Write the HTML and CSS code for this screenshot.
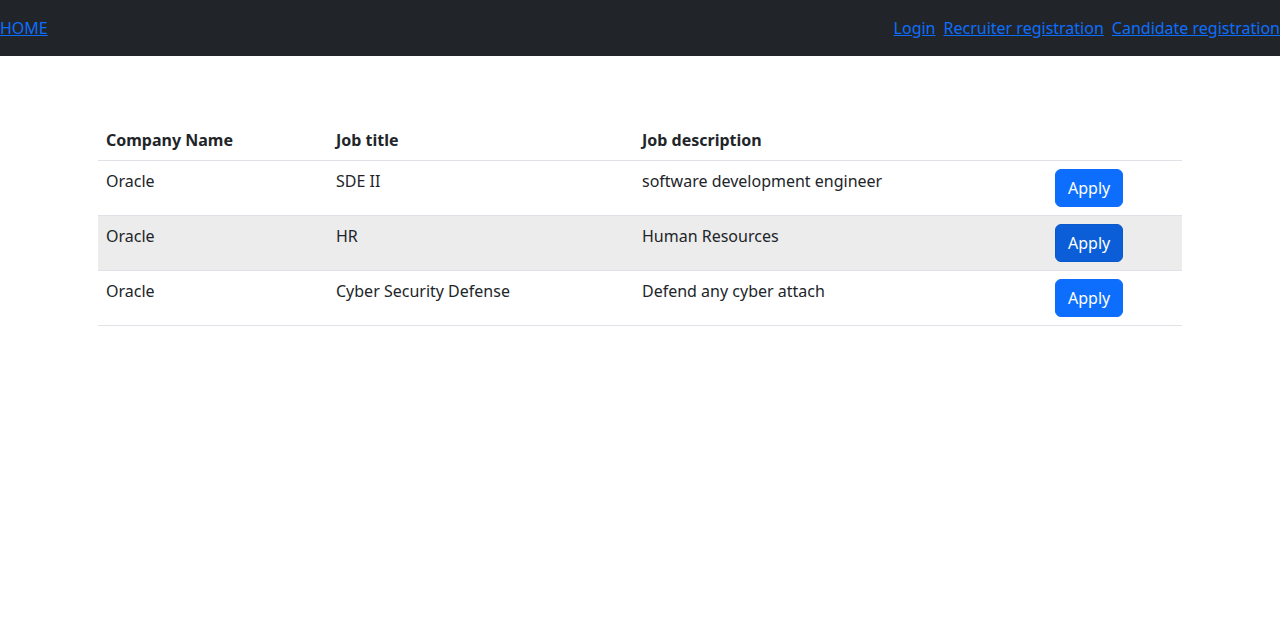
FILE: index.html
```html
<!DOCTYPE html>
<html lang="en">
<head>
<meta charset="utf-8">
<title>Jobs</title>
<link rel="stylesheet" href="styles.css">
</head>
<body>
<nav class="navbar">
  <a href="#" class="nav-link">HOME</a>
  <div class="nav-right">
    <a href="#" class="nav-link">Login</a>
    <a href="#" class="nav-link">Recruiter registration</a>
    <a href="#" class="nav-link">Candidate registration</a>
  </div>
</nav>
<main class="content">
  <table class="jobs">
    <thead>
      <tr>
        <th class="c1">Company Name</th>
        <th class="c2">Job title</th>
        <th class="c3">Job description</th>
        <th class="c4"></th>
      </tr>
    </thead>
    <tbody>
      <tr>
        <td>Oracle</td>
        <td>SDE II</td>
        <td>software development engineer</td>
        <td><button class="btn">Apply</button></td>
      </tr>
      <tr class="hover">
        <td>Oracle</td>
        <td>HR</td>
        <td>Human Resources</td>
        <td><button class="btn btn-hover">Apply</button></td>
      </tr>
      <tr>
        <td>Oracle</td>
        <td>Cyber Security Defense</td>
        <td>Defend any cyber attach</td>
        <td><button class="btn">Apply</button></td>
      </tr>
    </tbody>
  </table>
</main>
</body>
</html>
```
FILE: styles.css
```css
* { box-sizing: border-box; }
html, body {
  margin: 0;
  padding: 0;
  font-family: "Noto Sans", "Liberation Sans", sans-serif;
  font-size: 16px;
  line-height: 1.5;
  color: #212529;
  background: #fff;
}
.navbar {
  height: 56px;
  background: #212529;
  display: flex;
  align-items: center;
  justify-content: space-between;
}
.nav-right {
  display: flex;
  gap: 8px;
}
.nav-link {
  color: #0d6efd;
  text-decoration: underline;
}
.content {
  padding: 64px 98px 0;
}
.jobs {
  width: 1084px;
  border-collapse: collapse;
}
.jobs th, .jobs td {
  text-align: left;
  vertical-align: top;
  padding: 8px;
  border-bottom: 1px solid #dee2e6;
}
.jobs th { font-weight: 700; }
.jobs thead th { border-bottom-color: #dee2e6; }
.c1 { width: 230px; }
.c2 { width: 306px; }
.c3 { width: 413px; }
.c4 { width: 135px; }
.jobs tr.hover td { background: #ececec; }
.btn {
  font-family: inherit;
  font-size: 16px;
  line-height: 1.5;
  padding: 6px 12px;
  border: 1px solid #0d6efd;
  border-radius: 6px;
  background: #0d6efd;
  color: #fff;
  cursor: pointer;
}
.btn-hover {
  background: #0b5ed7;
  border-color: #0a58ca;
}
```
